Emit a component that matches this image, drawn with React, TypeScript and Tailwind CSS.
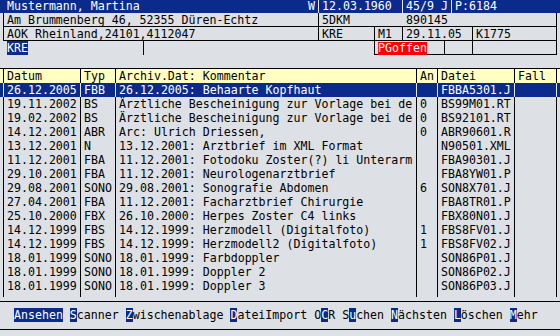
const rows: string[][] = [
  ['26.12.2005', 'FBB', '26.12.2005: Behaarte Kopfhaut', '', 'FBBA5301.J', ''],
  ['19.11.2002', 'BS', 'Ärztliche Bescheinigung zur Vorlage bei de', '0', 'BS99M01.RT', ''],
  ['19.02.2002', 'BS', 'Ärztliche Bescheinigung zur Vorlage bei de', '0', 'BS92101.RT', ''],
  ['14.12.2001', 'ABR', 'Arc: Ulrich Driessen,', '0', 'ABR90601.R', ''],
  ['13.12.2001', 'N', '13.12.2001: Arztbrief im XML Format', '', 'N90501.XML', ''],
  ['11.12.2001', 'FBA', '11.12.2001: Fotodoku Zoster(?) li Unterarm', '', 'FBA90301.J', ''],
  ['29.10.2001', 'FBA', '11.12.2001: Neurologenarztbrief', '', 'FBA8YW01.P', ''],
  ['29.08.2001', 'SONO', '29.08.2001: Sonografie Abdomen', '6', 'SON8X701.J', ''],
  ['27.04.2001', 'FBA', '11.12.2001: Facharztbrief Chirurgie', '', 'FBA8TR01.P', ''],
  ['25.10.2000', 'FBX', '26.10.2000: Herpes Zoster C4 links', '', 'FBX80N01.J', ''],
  ['14.12.1999', 'FBS', '14.12.1999: Herzmodell (Digitalfoto)', '1', 'FBS8FV01.J', ''],
  ['14.12.1999', 'FBS', '14.12.1999: Herzmodell2 (Digitalfoto)', '1', 'FBS8FV02.J', ''],
  ['18.01.1999', 'SONO', '18.01.1999: Farbdoppler', '', 'SON86P01.J', ''],
  ['18.01.1999', 'SONO', '18.01.1999: Doppler 2', '', 'SON86P02.J', ''],
  ['18.01.1999', 'SONO', '18.01.1999: Doppler 3', '', 'SON86P03.J', ''],
];

const header = ['Datum', 'Typ', 'Archiv.Dat: Kommentar', 'An', 'Datei', 'Fall'];
const widths = ['w-[77px]', 'w-[35px]', 'w-[301px]', 'w-[21px]', 'w-[77px]', 'w-[42px]'];

function TableRow({ cells, selected, className = '' }: { cells: string[]; selected?: boolean; className?: string }) {
  const line = selected ? 'border-[#e4e7ee]' : 'border-black';
  return (
    <div className={`flex h-[14px] ${className} ${selected ? 'bg-[#0b2b8c] text-white' : ''}`}>
      <div className="w-[3px] shrink-0" />
      {cells.map((c, i) => (
        <div key={i} className={`${widths[i]} shrink-0 border-l ${line} pl-[3px] overflow-hidden whitespace-pre`}>
          {c}
        </div>
      ))}
      <div className={`w-px shrink-0 ${selected ? 'bg-[#e4e7ee]' : 'bg-black'}`} />
    </div>
  );
}

function Key({ pre = '', hot, post = '' }: { pre?: string; hot: string; post?: string }) {
  return (
    <span>
      {pre}
      <span className="bg-[#0b2b8c] text-white">{hot}</span>
      {post}
    </span>
  );
}

export default function App() {
  return (
    <div
      className="w-[560px] h-[336px] overflow-hidden bg-[#dde0e4] text-black text-[11.6px] leading-[14px] whitespace-pre"
      style={{ fontFamily: '"DejaVu Sans Mono", "Liberation Mono", monospace' }}
    >
      {/* Patient header */}
      <div className="flex h-[13px] leading-[13px] bg-[#0b2b8c] text-white">
        <div className="w-[318px] flex justify-between pl-[7px] pr-[3px]">
          <span>Mustermann, Martina</span>
          <span>W</span>
        </div>
        <div className="w-[84px] border-l border-[#e4e7ee] pl-[3px]">12.03.1960</div>
        <div className="w-[49px] border-l border-[#e4e7ee] pl-[3px]">45/9 J</div>
        <div className="flex-1 border-l border-[#e4e7ee] pl-[3px]">P:6184</div>
      </div>

      <div className="flex h-[14px]">
        <div className="w-[3px]" />
        <div className="w-[315px] border-l border-b border-black pl-[3px]">Am Brummenberg 46, 52355 Düren-Echtz</div>
        <div className="w-[84px] border-l border-b border-black pl-[3px]">5DKM</div>
        <div className="w-[154px] border-b border-black pl-[4px]">890145</div>
        <div className="w-px bg-black" />
      </div>

      <div className="flex h-[14px]">
        <div className="w-[3px]" />
        <div className="w-[315px] border-l border-b border-black pl-[3px]">AOK Rheinland,24101,4112047</div>
        <div className="w-[56px] border-l border-b border-black pl-[3px]">KRE</div>
        <div className="w-[28px] border-l border-b border-black pl-[3px]">M1</div>
        <div className="w-[70px] border-l border-b border-black pl-[3px]">29.11.05</div>
        <div className="w-[84px] border-l border-b border-black pl-[3px]">K1775</div>
        <div className="w-px bg-black" />
      </div>

      <div className="flex h-[14px]">
        <div className="w-[7px]" />
        <div className="w-[136px]">
          <span className="inline-block h-[14px] bg-[#0b2b8c] text-white">KRE</span>
        </div>
        <div className="w-[231px] border-l border-black" />
        <div className="w-[70px] border-l border-b border-black pl-[3px]">
          <span className="inline-block h-[13px] leading-[13px] bg-[#ff0000] text-white">PGoffen</span>
        </div>
        <div className="w-[28px] border-l border-b border-black" />
        <div className="w-[84px] border-l border-b border-black" />
        <div className="w-px bg-black" />
      </div>

      {/* Archive table */}
      <div className="mt-[13px] h-px bg-black" />
      <TableRow cells={header} className="bg-[#ffffc4]" />
      {rows.map((r, i) => (
        <TableRow key={i} cells={r} selected={i === 0} />
      ))}
      <div className="h-[4px] overflow-hidden">
        <TableRow cells={['', '', '', '', '', '']} />
      </div>

      {/* Function keys */}
      <div className="mt-[4px] h-[29px] border-t border-b border-black pt-[7px] pl-[14px] leading-[13px]">
        <Key hot="Ansehen" /> <Key hot="S" post="canner" /> <Key hot="Z" post="wischenablage" />{' '}
        <Key hot="D" post="ateiImport" /> <Key pre="O" hot="C" post="R" /> <Key pre="S" hot="u" post="chen" />{' '}
        <Key hot="N" post="ächsten" /> <Key hot="L" post="öschen" /> <Key hot="M" post="ehr" />
      </div>
    </div>
  );
}
